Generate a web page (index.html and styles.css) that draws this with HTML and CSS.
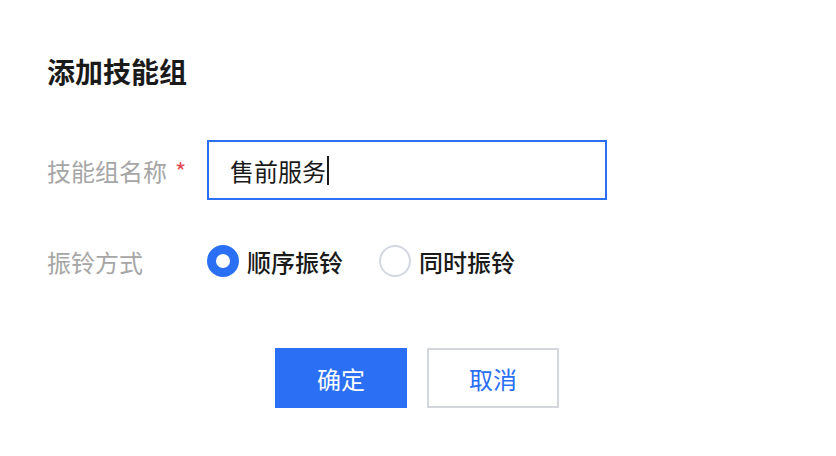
FILE: index.html
```html
<!DOCTYPE html>
<html lang="zh-CN">
<head>
    <meta charset="UTF-8">
    <meta name="viewport" content="width=device-width, initial-scale=1.0">
    <title>添加技能组</title>
    <link rel="stylesheet" href="styles.css">
</head>
<body>
    <div class="dialog">
        <h1 class="dialog-title">添加技能组</h1>

        <div class="form-row">
            <label class="form-label">技能组名称<span class="required">*</span></label>
            <div class="text-input">
                <span>售前服务</span><span class="caret"></span>
            </div>
        </div>

        <div class="form-row">
            <label class="form-label">振铃方式</label>
            <div class="radio-group">
                <span class="radio checked"><span class="radio-dot"></span>顺序振铃</span>
                <span class="radio"><span class="radio-dot"></span>同时振铃</span>
            </div>
        </div>

        <div class="dialog-footer">
            <button class="btn btn-primary">确定</button>
            <button class="btn btn-default">取消</button>
        </div>
    </div>
</body>
</html>
```

FILE: styles.css
```css
/* Osnovno */
body {
    margin: 0;
    background: #ffffff;
    font-family: "Noto Sans CJK SC", "Noto Sans", sans-serif;
    color: #1a1a1a;
}

.dialog {
    padding: 51px 47px 0 47px;
}

.dialog-title {
    margin: 0;
    font-size: 28px;
    line-height: 40px;
    font-weight: 700;
    color: #1a1a1a;
}

/* Redovi forme */
.form-row {
    display: flex;
    align-items: center;
    height: 60px;
}

.form-row:nth-of-type(1) {
    margin-top: 49px;
}

.form-row + .form-row {
    margin-top: 31px;
}

.form-label {
    width: 160px;
    font-size: 24px;
    color: #a6a6a6;
}

.required {
    color: #e34d59;
    margin-left: 8px;
}

.text-input {
    box-sizing: border-box;
    width: 400px;
    height: 60px;
    border: 2px solid #2a6ff4;
    padding-left: 21px;
    display: flex;
    align-items: center;
    font-size: 24px;
    color: #1a1a1a;
}

.caret {
    display: inline-block;
    width: 2px;
    height: 29px;
    background: #1a1a1a;
    margin-left: 1px;
}

/* Radio gumbi */
.radio-group {
    display: flex;
    align-items: center;
}

.radio {
    display: flex;
    align-items: center;
    font-size: 24px;
    font-weight: 500;
    color: #1a1a1a;
    margin-right: 36px;
}

.radio-dot {
    box-sizing: border-box;
    width: 32px;
    height: 32px;
    border-radius: 50%;
    border: 2px solid #d3d7df;
    margin-right: 8px;
}

.radio.checked .radio-dot {
    border: 9px solid #2a6ff4;
}

/* Gumbi */
.dialog-footer {
    display: flex;
    justify-content: center;
    gap: 20px;
    margin-top: 57px;
    padding-right: 2px;
}

.btn {
    box-sizing: border-box;
    width: 132px;
    height: 60px;
    font-family: inherit;
    font-size: 24px;
    cursor: pointer;
}

.btn-primary {
    background: #2a6ff4;
    color: #ffffff;
    border: none;
}

.btn-default {
    background: #ffffff;
    color: #2a6ff4;
    border: 2px solid #d3d6dd;
}
```
